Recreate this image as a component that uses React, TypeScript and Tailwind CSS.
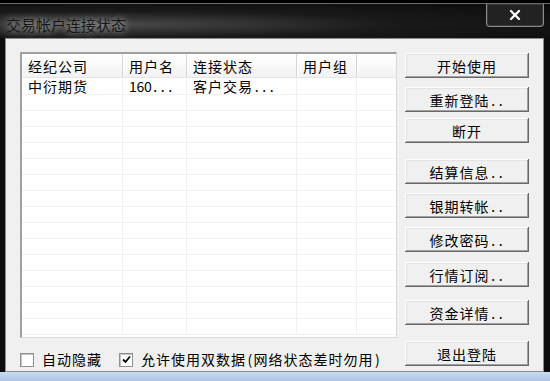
import { X } from 'lucide-react';

const cols = [
  { w: 'w-[101px]', label: '经纪公司' },
  { w: 'w-[64px]', label: '用户名' },
  { w: 'w-[110px]', label: '连接状态' },
  { w: 'w-[60px]', label: '用户组' },
];

const row = ['中衍期货', '160...', '客户交易...', ''];

const buttons = [
  { label: '开始使用', mt: 'mt-[14px]' },
  { label: '重新登陆..', mt: 'mt-[9px]' },
  { label: '断开', mt: 'mt-[6px]' },
  { label: '结算信息..', mt: 'mt-[16px]' },
  { label: '银期转帐..', mt: 'mt-[9px]' },
  { label: '修改密码..', mt: 'mt-[9px]' },
  { label: '行情订阅..', mt: 'mt-[10px]' },
  { label: '资金详情..', mt: 'mt-[13px]' },
  { label: '退出登陆', mt: 'mt-[16px]' },
];

const font = "font-['Noto_Sans_CJK_SC','Liberation_Sans',sans-serif]";

// 宋体式等宽排字：汉字 15px，半角 7.5px
function Txt({ children }: { children: string }) {
  return (
    <span className="inline-flex leading-none">
      {Array.from(children).map((ch, i) =>
        ch.charCodeAt(0) < 128 ? (
          <span key={i} className="w-[7.5px] text-center">
            {ch}
          </span>
        ) : (
          <span key={i} className="w-[15px] text-left">
            {ch}
          </span>
        ),
      )}
    </span>
  );
}

export default function App() {
  return (
    <div className={`w-[550px] h-[381px] bg-[#0d0d0d] flex flex-col overflow-hidden ${font}`}>
      {/* 标题栏 */}
      <div className="h-[38px] flex flex-col">
        <div className="h-[4px] bg-black border-b border-[#6a6a6a]" />
        <div className="flex-1 flex items-start justify-between bg-[radial-gradient(ellipse_at_20%_60%,#4a4a4a_0%,#1a1a1a_45%,#0b0b0b_100%)]">
          <span className="ml-[6px] mt-[10px] text-[15px] text-[#151515] [text-shadow:0_0_6px_rgba(255,255,255,0.55),0_0_12px_rgba(255,255,255,0.35)]">
            <Txt>交易帐户连接状态</Txt>
          </span>
          <div className="mr-[6px] w-[58px] h-[23px] bg-[#222] border border-t-0 border-[#8a8a8a] rounded-b-[4px] flex items-center justify-center shadow-[inset_0_0_0_1px_#3a3a3a]">
            <X className="w-[16px] h-[16px] text-white" strokeWidth={3.5} />
          </div>
        </div>
      </div>

      {/* 客户区 */}
      <div className="ml-[5px] mr-[6px] h-[334px] bg-[#f0f0f0] border border-[#8c8c8c] flex pl-[14px] pr-[14px] text-[14px] text-black">
        <div className="w-[377px] flex flex-col pt-[13px]">
          <div className="h-[286px] bg-white border-t-2 border-l-2 border-[#a0a0a0] border-r border-b border-r-[#d8d8d8] border-b-[#d8d8d8] flex flex-col overflow-hidden">
            <div className="h-[24px] flex bg-[linear-gradient(#ffffff,#f2f2f2)] border-b border-[#e5e5e5] shrink-0">
              {cols.map((c) => (
                <div
                  key={c.label}
                  className={`${c.w} h-full pl-[6px] flex items-center border-r border-[#d5d5d5] shadow-[1px_0_0_#ffffff]`}
                >
                  <Txt>{c.label}</Txt>
                </div>
              ))}
            </div>
            <div className="h-[17px] flex border-b border-[#f0f0f0] shrink-0">
              {cols.map((c, i) => (
                <div
                  key={c.label}
                  className={`${c.w} h-full pl-[6px] flex items-center border-r border-[#f0f0f0]`}
                >
                  <Txt>{row[i]}</Txt>
                </div>
              ))}
            </div>
            {Array.from({ length: 15 }).map((_, r) => (
              <div key={r} className="h-[16px] flex border-b border-[#f0f0f0] shrink-0">
                {cols.map((c) => (
                  <div key={c.label} className={`${c.w} h-full border-r border-[#f0f0f0]`} />
                ))}
              </div>
            ))}
          </div>

          <div className="mt-[11px] flex items-center">
            <Check checked={false} />
            <span className="ml-[8px]">
              <Txt>自动隐藏</Txt>
            </span>
            <span className="ml-[17px]" />
            <Check checked />
            <span className="ml-[8px]">
              <Txt>允许使用双数据(网络状态差时勿用)</Txt>
            </span>
          </div>
        </div>

        <div className="ml-[8px] w-[124px] flex flex-col">
          {buttons.map((b) => (
            <button
              key={b.label}
              className={`${b.mt} h-[25px] w-full bg-[#f0f0f0] flex items-center justify-center shadow-[inset_-1px_-1px_#696969,inset_1px_1px_#ffffff,inset_-2px_-2px_#a0a0a0,inset_2px_2px_#e3e3e3]`}
            >
              <Txt>{b.label}</Txt>
            </button>
          ))}
        </div>
      </div>

      <div className="flex-1 bg-[linear-gradient(#c9dcf0,#a9c4e4)]" />
    </div>
  );
}

function Check({ checked }: { checked: boolean }) {
  return (
    <div className="w-[14px] h-[14px] bg-white border border-[#8e8f8f] shadow-[inset_1px_1px_#c4c4c4] flex items-center justify-center">
      {checked && (
        <svg width="9" height="9" viewBox="0 0 9 9">
          <path d="M1 4.5 L3.5 7 L8 1.5" fill="none" stroke="#000" strokeWidth="1.8" />
        </svg>
      )}
    </div>
  );
}
